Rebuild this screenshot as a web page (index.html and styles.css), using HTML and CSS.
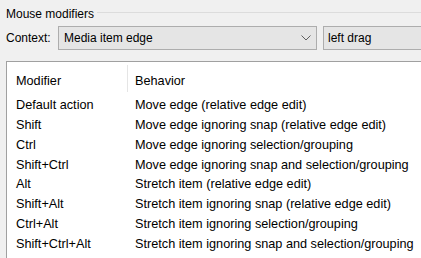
FILE: index.html
```html
<!DOCTYPE html>
<html lang="en">
<head>
    <meta charset="UTF-8">
    <title>Mouse modifiers</title>
    <link rel="stylesheet" href="styles.css">
</head>
<body>
<div class="group">
    <div class="group-head">
        <span class="group-title">Mouse modifiers</span>
        <span class="group-line"></span>
    </div>
    <div class="context">
        <span class="context-label">Context:</span>
        <div class="combo">
            <span class="combo-text">Media item edge</span>
            <svg class="chev" width="10" height="6" viewBox="0 0 10 6"><path d="M0.5 0.5 L5 5 L9.5 0.5" fill="none" stroke="#606060" stroke-width="1"/></svg>
        </div>
        <div class="combo combo-action">
            <span class="combo-text">left drag</span>
        </div>
    </div>
    <div class="list">
        <div class="list-head">
            <div class="col-mod head-cell">Modifier</div>
            <div class="col-beh head-cell">Behavior</div>
        </div>
        <ul class="rows">
            <li><span class="col-mod">Default action</span><span class="col-beh">Move edge (relative edge edit)</span></li>
            <li><span class="col-mod">Shift</span><span class="col-beh">Move edge ignoring snap (relative edge edit)</span></li>
            <li><span class="col-mod">Ctrl</span><span class="col-beh">Move edge ignoring selection/grouping</span></li>
            <li><span class="col-mod">Shift+Ctrl</span><span class="col-beh">Move edge ignoring snap and selection/grouping</span></li>
            <li><span class="col-mod">Alt</span><span class="col-beh">Stretch item (relative edge edit)</span></li>
            <li><span class="col-mod">Shift+Alt</span><span class="col-beh">Stretch item ignoring snap (relative edge edit)</span></li>
            <li><span class="col-mod">Ctrl+Alt</span><span class="col-beh">Stretch item ignoring selection/grouping</span></li>
            <li><span class="col-mod">Shift+Ctrl+Alt</span><span class="col-beh">Stretch item ignoring snap and selection/grouping</span></li>
        </ul>
    </div>
</div>
</body>
</html>
```

FILE: styles.css
```css
*{ margin: 0; padding: 0; box-sizing: border-box; }
ul{ list-style: none; }
html,body{
    width: 421px;
    height: 258px;
    overflow: hidden;
}
body{
    background: #f0f0f0;
    font-family: "Liberation Sans", Arial, sans-serif;
    font-size: 12px;
    color: #000;
}
.group{
    padding-top: 6px;
}
.group-head{
    display: flex;
    height: 16px;
}
.group-title{
    padding-left: 6px;
    line-height: 16px;
}
.group-line{
    flex: 1;
    margin: 6px 0 0 3px;
    border-top: 1px solid #dcdcdc;
}
.context{
    display: flex;
    align-items: center;
    height: 24px;
    margin-top: 4px;
}
.context-label{
    width: 58px;
    padding-left: 6px;
}
.combo{
    display: flex;
    align-items: center;
    justify-content: space-between;
    width: 259px;
    height: 24px;
    padding: 0 5px 0 5px;
    background: #e5e5e5;
    border: 1px solid #adadad;
}
.combo-action{
    flex: 1;
    margin-left: 6px;
    margin-right: -4px;
    padding-left: 4px;
}
.chev{
    display: block;
}
.list{
    margin: 11px 0 0 6px;
    height: 200px;
    background: #fff;
    border-top: 1px solid #a0a0a0;
    border-left: 1px solid #a0a0a0;
    font-size: 12.7px;
}
.list-head{
    display: flex;
    height: 34px;
}
.head-cell{
    padding-top: 9px;
    line-height: 20px;
}
.list-head .col-mod{
    margin: 3px 0 4px;
    padding-top: 6px;
    border-right: 1px solid #e5e5e5;
}
.col-mod{
    width: 121px;
    padding-left: 9px;
    flex-shrink: 0;
}
.col-beh{
    padding-left: 7px;
    white-space: nowrap;
}
.rows li{
    display: flex;
    height: 19.86px;
    line-height: 19.86px;
}
```
